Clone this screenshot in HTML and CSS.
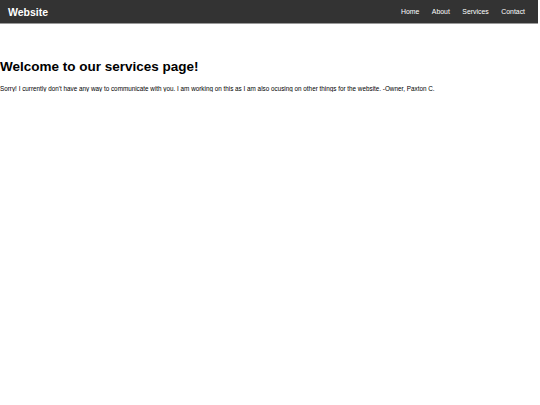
FILE: index.html
```html
<!DOCTYPE html>
<html lang="en">
<head>
  <meta charset="UTF-8">
  <meta name="viewport" content="width=device-width, initial-scale=1.0">
  <title>Services</title>
  <link rel="stylesheet" href="styles.css">
</head>
<body>
  <header class="topbar">
    <div class="logo">Website</div>
    <nav class="nav">
      <a href="#">Home</a>
      <a href="#">About</a>
      <a href="#">Services</a>
      <a href="#">Contact</a>
    </nav>
  </header>

  <main class="content">
    <h1>Welcome to our services page!</h1>
    <p>Sorry! I currently don't have any way to communicate with you. I am working on this as I am also ocusing on other things for the website. -Owner, Paxton C.</p>
  </main>
</body>
</html>
```

FILE: styles.css
```css
body {
  margin: 0;
  font-family: "Liberation Sans", Arial, sans-serif;
  background: #fff;
  color: #000;
}

.topbar {
  display: flex;
  justify-content: space-between;
  align-items: center;
  height: 23px;
  padding: 0 13px 0 8px;
  margin-right: 2px;
  background-color: #333;
  border-bottom: 1px solid #999;
}

.logo {
  color: #fff;
  font-weight: bold;
  font-size: 10.5px;
}

.nav {
  display: flex;
  gap: 12.5px;
}

.nav a {
  color: #fff;
  text-decoration: none;
  font-size: 6.9px;
}

.content h1 {
  margin: 35px 0 0;
  font-size: 13.5px;
}

.content p {
  margin: 10.5px 0 0;
  font-size: 6.33px;
}
```
